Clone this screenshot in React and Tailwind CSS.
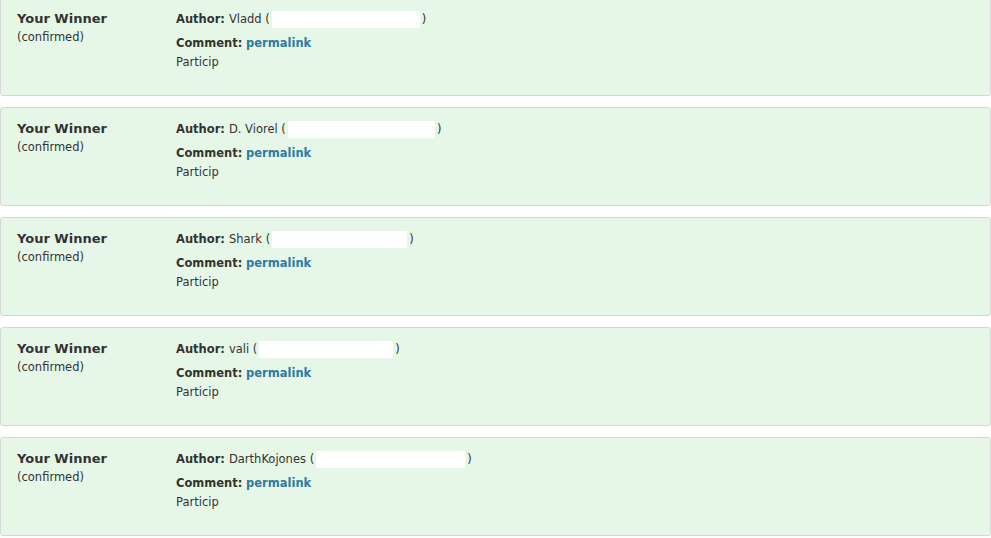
import React from "react";

const winners = [
  { name: "Vladd", box: 148 },
  { name: "D. Viorel", box: 147 },
  { name: "Shark", box: 135 },
  { name: "vali", box: 134 },
  { name: "DarthKojones", box: 149 },
];

function Card({ w }) {
  return (
    <div className="flex h-[99px] rounded-[3px] border border-[#d6d6d6] bg-[#e7f7e7] pl-4 pt-[12px]">
      <div className="w-[159px] shrink-0">
        <div className="text-[13px] font-bold leading-[18px] text-[#333]">Your Winner</div>
        <div className="mt-[2px] text-[11.5px] leading-[14px] text-[#333]">(confirmed)</div>
      </div>
      <div className="text-[11.5px] text-[#333]">
        <div className="flex items-center leading-[18px]">
          <span className="font-bold">Author:</span>
          <span className="ml-[4px]">{w.name} (</span>
          <span className="ml-[2px] inline-block h-[17px] bg-white" style={{ width: w.box }} />
          <span className="ml-[2px]">)</span>
        </div>
        <div className="mt-[8px] leading-[14px]">
          <span className="font-bold">Comment:</span>{" "}
          <a href="#" className="font-bold text-[#2b7ba3]">permalink</a>
        </div>
        <div className="mt-[5px] leading-[14px]">Particip</div>
      </div>
    </div>
  );
}

export default function App() {
  return (
    <div className="min-h-screen bg-white font-['DejaVu_Sans',Verdana,sans-serif]">
      <div className="-mt-[3px] flex flex-col gap-[11px]">
        {winners.map((w) => (
          <Card key={w.name} w={w} />
        ))}
      </div>
    </div>
  );
}
